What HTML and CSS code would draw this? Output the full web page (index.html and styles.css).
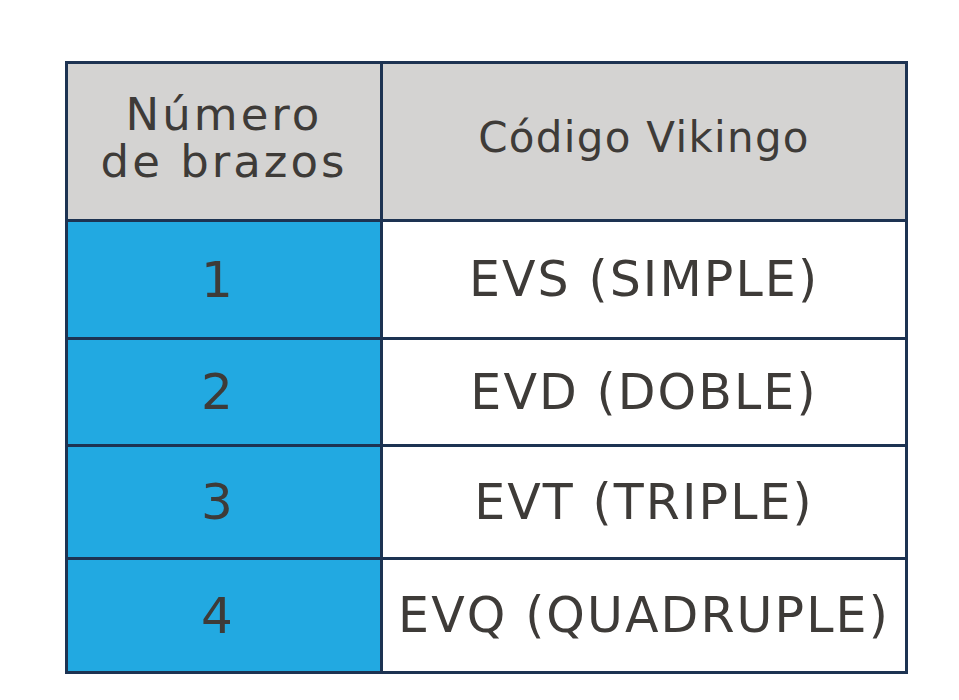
FILE: index.html
```html
<!DOCTYPE html>
<html lang="es">
<head>
<meta charset="utf-8">
<title>Código Vikingo</title>
<link rel="stylesheet" href="styles.css">
</head>
<body>
<div class="table">
  <div class="cell head num-head">Número<br>de brazos</div>
  <div class="cell head code-head">Código Vikingo</div>
  <div class="cell num">1</div>
  <div class="cell code">EVS (SIMPLE)</div>
  <div class="cell num">2</div>
  <div class="cell code">EVD (DOBLE)</div>
  <div class="cell num">3</div>
  <div class="cell code">EVT (TRIPLE)</div>
  <div class="cell num">4</div>
  <div class="cell code">EVQ (QUADRUPLE)</div>
</div>
</body>
</html>
```
FILE: styles.css
```css
html, body {
  margin: 0;
  padding: 0;
  background: #ffffff;
}
body {
  padding: 61px 0 0 65px;
  font-family: "DejaVu Sans", "Noto Sans", sans-serif;
  color: #3e3b38;
}
.table {
  display: grid;
  grid-template-columns: 312px 522px;
  grid-template-rows: 155px 115px 104px 110px 111px;
  gap: 3px;
  padding: 3px;
  background: #1d3352;
  width: max-content;
}
.cell {
  display: flex;
  align-items: center;
  justify-content: center;
  text-align: center;
}
.head {
  background: #d4d3d2;
  padding-bottom: 8px;
  box-sizing: border-box;
}
.num-head {
  font-size: 45px;
  line-height: 47px;
  letter-spacing: 3px;
}
.code-head {
  font-size: 42px;
  letter-spacing: 1.3px;
}
.num {
  background: #22a9e1;
  font-size: 50px;
  padding-right: 14px;
}
.code {
  background: #ffffff;
  font-size: 49px;
  letter-spacing: 2.1px;
}
```
